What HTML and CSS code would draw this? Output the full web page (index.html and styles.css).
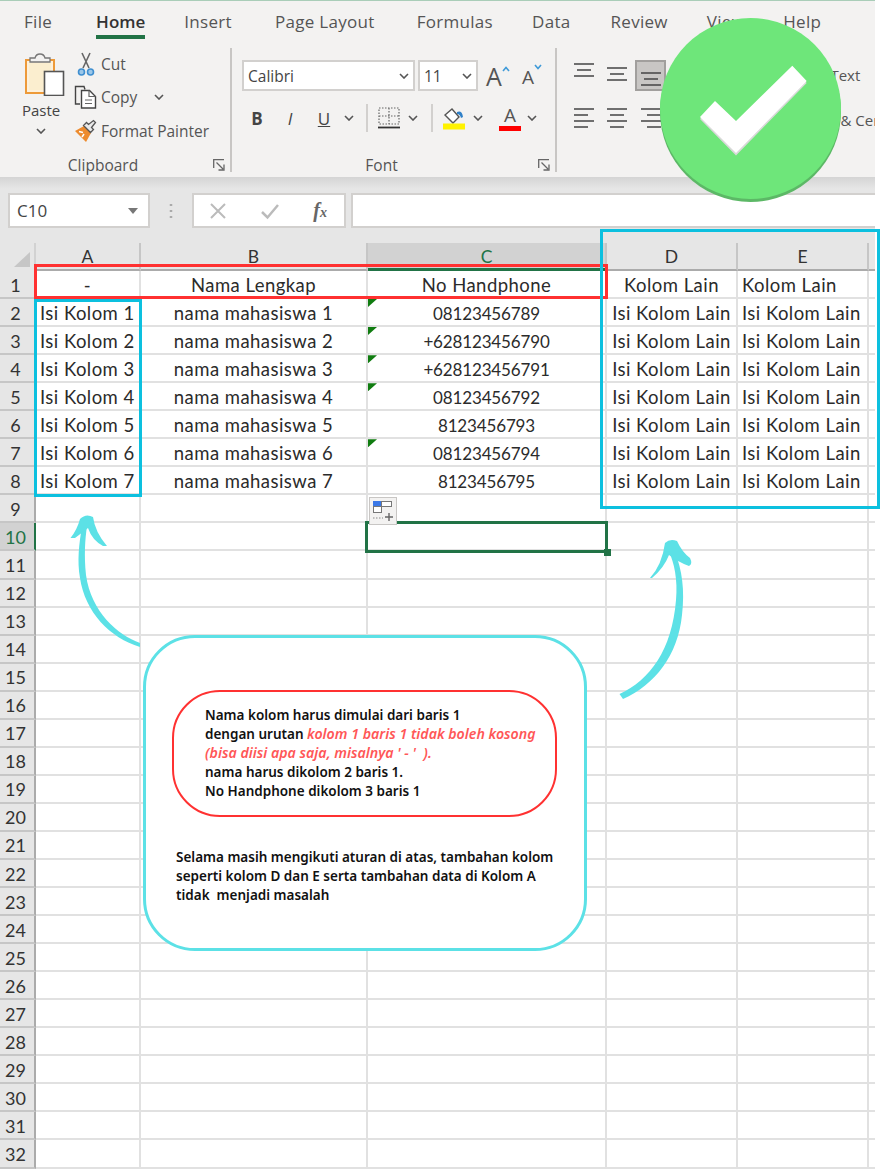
FILE: index.html
```html
<!DOCTYPE html>
<html lang="id">
<head>
<meta charset="utf-8">
<title>Format Excel</title>
<link rel="stylesheet" href="styles.css">
</head>
<body>
<svg class="defs" width="0" height="0" aria-hidden="true">
  <symbol id="chev" viewBox="0 0 10 6"><polyline points="1,1 5,5 9,1" fill="none" stroke="#555" stroke-width="1.6"/></symbol>
  <symbol id="launch" viewBox="0 0 12 12"><path d="M.7 9V.7H11M3.5 3.5L10 10M5.5 11H11V5.5" fill="none" stroke="#666" stroke-width="1.3"/></symbol>
  <symbol id="al-left" viewBox="0 0 20 20"><path d="M0 1h20M0 7h14M0 13h20M0 19h14" stroke="#444" stroke-width="1.5"/></symbol>
  <symbol id="al-center" viewBox="0 0 20 20"><path d="M0 1h20M3 7h14M0 13h20M3 19h14" stroke="#444" stroke-width="1.5"/></symbol>
  <symbol id="al-right" viewBox="0 0 20 20"><path d="M0 1h20M6 7h14M0 13h20M6 19h14" stroke="#444" stroke-width="1.5"/></symbol>
  <symbol id="al-v" viewBox="0 0 20 14"><path d="M0 1h20M3 7h14M0 13h20" stroke="#444" stroke-width="1.5"/></symbol>
</svg>

<main class="app">
  <header class="ribbon">
    <nav class="tabs">
      <span class="tab tab-file">File</span>
      <span class="tab tab-home">Home</span>
      <span class="tab tab-insert">Insert</span>
      <span class="tab tab-layout">Page Layout</span>
      <span class="tab tab-formulas">Formulas</span>
      <span class="tab tab-data">Data</span>
      <span class="tab tab-review">Review</span>
      <span class="tab tab-view">View</span>
      <span class="tab tab-help">Help</span>
    </nav>
    <div class="groups">
      <section class="group group-clip">
        <div class="clip-body">
          <div class="paste">
            <svg class="paste-icon" width="40" height="43" viewBox="0 0 40 43">
              <rect x="1" y="7" width="28" height="33" fill="#fdf1dc" stroke="#ed9a3a" stroke-width="2"/>
              <path d="M4 10h22v27H4z" fill="#fbeecf"/>
              <path d="M5 9V5h5q1-4 5-4t5 4h5v4z" fill="#f3f2f1" stroke="#777" stroke-width="1.3"/>
              <rect x="19.5" y="18.5" width="19" height="24" fill="#fff" stroke="#555" stroke-width="1.6"/>
            </svg>
            <span class="paste-label">Paste</span>
            <svg class="chev"><use href="#chev"/></svg>
          </div>
          <div class="clip-list">
            <div class="clip-item">
              <svg class="clip-icon" width="24" height="24" viewBox="0 0 24 24">
                <path d="M8 1l7 15M16 1L9 16" stroke="#666" stroke-width="1.6" fill="none"/>
                <circle cx="7.5" cy="20" r="3" fill="#9cc7e8" stroke="#3f8fd0" stroke-width="1.6"/>
                <circle cx="16.5" cy="20" r="3" fill="#9cc7e8" stroke="#3f8fd0" stroke-width="1.6"/>
              </svg>
              <span>Cut</span>
            </div>
            <div class="clip-item">
              <svg class="clip-icon" width="24" height="24" viewBox="0 0 24 24">
                <path d="M6 19H1.5V1.5h8.5l1 3" fill="none" stroke="#444" stroke-width="1.4"/>
                <path d="M7.5 5.5h8l6 6v11.5h-14z" fill="#fff" stroke="#444" stroke-width="1.4"/>
                <path d="M15 5.5v6h6.500M11 15h7M11 18.500h7" fill="none" stroke="#666" stroke-width="1.200"/>
              </svg>
              <span>Copy</span>
              <svg class="chev chev-copy"><use href="#chev"/></svg>
            </div>
            <div class="clip-item">
              <svg class="clip-icon" width="24" height="24" viewBox="0 0 24 24">
                <path d="M1 12l9-5 7 7-5 9z" fill="#ed8b2e"/>
                <path d="M5 12.500l4 1M8 18l2-3" stroke="#fff" stroke-width="1.500"/>
                <path d="M9.500 6.500l7 7 3-3-2-2 4-5-2-2-5 4-2-2z" fill="#e9e9e9" stroke="#555" stroke-width="1.300"/>
              </svg>
              <span>Format Painter</span>
            </div>
          </div>
        </div>
        <footer class="gfoot"><span class="glabel">Clipboard</span><svg class="launch"><use href="#launch"/></svg></footer>
      </section>

      <section class="group group-font">
        <div class="font-row1">
          <div class="combo combo-name"><span>Calibri</span><svg class="chev"><use href="#chev"/></svg></div>
          <div class="combo combo-size"><span>11</span><svg class="chev"><use href="#chev"/></svg></div>
          <span class="grow"><span class="grow-a">A</span><svg width="8" height="6" viewBox="0 0 8 6"><polyline points="1,5 4,1.500 7,5" fill="none" stroke="#3f9ad8" stroke-width="1.600"/></svg></span>
          <span class="shrink"><span class="shrink-a">A</span><svg width="8" height="6" viewBox="0 0 8 6"><polyline points="1,1 4,4.500 7,1" fill="none" stroke="#3f9ad8" stroke-width="1.600"/></svg></span>
        </div>
        <div class="font-row2">
          <span class="tool t-b">B</span>
          <span class="tool t-i">I</span>
          <span class="tool t-u">U</span>
          <span class="tool t-chev1"><svg class="chev"><use href="#chev"/></svg></span>
          <span class="sep sep1"></span>
          <span class="tool t-border">
            <svg width="22" height="22" viewBox="0 0 22 22">
              <path d="M1 1h20v16H1zM11 1v16M1 9h20" fill="none" stroke="#666" stroke-width="1.200" stroke-dasharray="1.500 1.500"/>
              <path d="M0 20.500h22" stroke="#333" stroke-width="1.800"/>
            </svg>
          </span>
          <span class="tool t-chev2"><svg class="chev"><use href="#chev"/></svg></span>
          <span class="sep sep2"></span>
          <span class="tool t-fill">
            <svg width="24" height="24" viewBox="0 0 24 24">
              <path d="M3 9l7-6 7 8-6 6z" fill="#fff" stroke="#555" stroke-width="1.400"/>
              <path d="M15 6q5-2 6 5l-2 1q-1-4-4-4z" fill="#2f80c8"/>
              <rect x="1" y="17.500" width="22" height="6" fill="#fff200"/>
            </svg>
          </span>
          <span class="tool t-chev3"><svg class="chev"><use href="#chev"/></svg></span>
          <span class="tool t-color"><span class="color-a">A</span><span class="color-bar"></span></span>
          <span class="tool t-chev4"><svg class="chev"><use href="#chev"/></svg></span>
        </div>
        <footer class="gfoot"><span class="glabel">Font</span><svg class="launch"><use href="#launch"/></svg></footer>
      </section>

      <section class="group-align">
        <div class="align-row">
          <svg class="al al-top" width="20" height="14"><use href="#al-v"/></svg>
          <svg class="al al-mid" width="20" height="14"><use href="#al-v"/></svg>
          <span class="al-sel"><svg width="20" height="14"><use href="#al-v"/></svg></span>
          <span class="wrap-label">Wrap Text</span>
        </div>
        <div class="align-row align-row2">
          <svg class="al" width="20" height="20"><use href="#al-left"/></svg>
          <svg class="al al-2" width="20" height="20"><use href="#al-center"/></svg>
          <svg class="al al-3" width="20" height="20"><use href="#al-right"/></svg>
          <span class="merge-label">Merge &amp; Center</span>
        </div>
      </section>
    </div>
  </header>

  <div class="fbar">
    <div class="namebox"><span>C10</span><span class="namecaret"></span></div>
    <svg class="fdots" width="4" height="16" viewBox="0 0 4 16"><path d="M2 1v2M2 7v2M2 13v2" stroke="#aaa" stroke-width="2.500"/></svg>
    <div class="fbtns">
      <svg width="18" height="18" viewBox="0 0 18 18"><path d="M2 2l14 14M16 2L2 16" stroke="#bbb" stroke-width="2"/></svg>
      <svg width="20" height="18" viewBox="0 0 20 18"><path d="M2 10l5.500 5.500L18 3" fill="none" stroke="#bbb" stroke-width="2.500"/></svg>
      <span class="fx"><i>f</i><i class="fx-x">x</i></span>
    </div>
    <div class="finput"></div>
  </div>

  <div class="sheet">
    <div class="row row-head">
      <div class="corner"></div>
      <div class="ch">A</div><div class="ch">B</div><div class="ch ch-sel">C</div><div class="ch">D</div><div class="ch">E</div><div class="ch ch-end"></div>
    </div>
    <div class="row"><div class="rh">1</div><div class="c ctr">-</div><div class="c ctr">Nama Lengkap</div><div class="c ctr">No Handphone</div><div class="c ctr">Kolom Lain</div><div class="c lft">Kolom Lain</div><div class="c"></div></div>
    <div class="row"><div class="rh">2</div><div class="c lft">Isi Kolom 1</div><div class="c ctr">nama mahasiswa 1</div><div class="c ctr num note">08123456789</div><div class="c ctr">Isi Kolom Lain</div><div class="c lft">Isi Kolom Lain</div><div class="c"></div></div>
    <div class="row"><div class="rh">3</div><div class="c lft">Isi Kolom 2</div><div class="c ctr">nama mahasiswa 2</div><div class="c ctr num note">+628123456790</div><div class="c ctr">Isi Kolom Lain</div><div class="c lft">Isi Kolom Lain</div><div class="c"></div></div>
    <div class="row"><div class="rh">4</div><div class="c lft">Isi Kolom 3</div><div class="c ctr">nama mahasiswa 3</div><div class="c ctr num note">+628123456791</div><div class="c ctr">Isi Kolom Lain</div><div class="c lft">Isi Kolom Lain</div><div class="c"></div></div>
    <div class="row"><div class="rh">5</div><div class="c lft">Isi Kolom 4</div><div class="c ctr">nama mahasiswa 4</div><div class="c ctr num note">08123456792</div><div class="c ctr">Isi Kolom Lain</div><div class="c lft">Isi Kolom Lain</div><div class="c"></div></div>
    <div class="row"><div class="rh">6</div><div class="c lft">Isi Kolom 5</div><div class="c ctr">nama mahasiswa 5</div><div class="c ctr num">8123456793</div><div class="c ctr">Isi Kolom Lain</div><div class="c lft">Isi Kolom Lain</div><div class="c"></div></div>
    <div class="row"><div class="rh">7</div><div class="c lft">Isi Kolom 6</div><div class="c ctr">nama mahasiswa 6</div><div class="c ctr num note">08123456794</div><div class="c ctr">Isi Kolom Lain</div><div class="c lft">Isi Kolom Lain</div><div class="c"></div></div>
    <div class="row"><div class="rh">8</div><div class="c lft">Isi Kolom 7</div><div class="c ctr">nama mahasiswa 7</div><div class="c ctr num">8123456795</div><div class="c ctr">Isi Kolom Lain</div><div class="c lft">Isi Kolom Lain</div><div class="c"></div></div>
    <div class="row"><div class="rh">9</div><div class="c"></div><div class="c"></div><div class="c c-paste"><span class="pasteopt"><svg width="24" height="24" viewBox="0 0 24 24"><rect x="2.500" y="2.500" width="8" height="5" fill="#3b78e7" stroke="#3b78e7"/><rect x="10.500" y="2.500" width="10" height="5" fill="#fff" stroke="#777"/><rect x="2.500" y="7.500" width="8" height="6" fill="#fff" stroke="#777"/><path d="M2 19h10" stroke="#888" stroke-dasharray="1.500 1.500"/><path d="M18 14v8M14 18h8" stroke="#666" stroke-width="1.400"/></svg></span></div><div class="c"></div><div class="c"></div><div class="c"></div></div>
    <div class="row"><div class="rh rh-sel">10</div><div class="c"></div><div class="c"></div><div class="c c-sel"></div><div class="c"></div><div class="c"></div><div class="c"></div></div>
    <div class="row"><div class="rh">11</div><div class="c"></div><div class="c"></div><div class="c"></div><div class="c"></div><div class="c"></div><div class="c"></div></div>
    <div class="row"><div class="rh">12</div><div class="c"></div><div class="c"></div><div class="c"></div><div class="c"></div><div class="c"></div><div class="c"></div></div>
    <div class="row"><div class="rh">13</div><div class="c"></div><div class="c"></div><div class="c"></div><div class="c"></div><div class="c"></div><div class="c"></div></div>
    <div class="row"><div class="rh">14</div><div class="c"></div><div class="c"></div><div class="c"></div><div class="c"></div><div class="c"></div><div class="c"></div></div>
    <div class="row"><div class="rh">15</div><div class="c"></div><div class="c"></div><div class="c"></div><div class="c"></div><div class="c"></div><div class="c"></div></div>
    <div class="row"><div class="rh">16</div><div class="c"></div><div class="c"></div><div class="c"></div><div class="c"></div><div class="c"></div><div class="c"></div></div>
    <div class="row"><div class="rh">17</div><div class="c"></div><div class="c"></div><div class="c"></div><div class="c"></div><div class="c"></div><div class="c"></div></div>
    <div class="row"><div class="rh">18</div><div class="c"></div><div class="c"></div><div class="c"></div><div class="c"></div><div class="c"></div><div class="c"></div></div>
    <div class="row"><div class="rh">19</div><div class="c"></div><div class="c"></div><div class="c"></div><div class="c"></div><div class="c"></div><div class="c"></div></div>
    <div class="row"><div class="rh">20</div><div class="c"></div><div class="c"></div><div class="c"></div><div class="c"></div><div class="c"></div><div class="c"></div></div>
    <div class="row"><div class="rh">21</div><div class="c"></div><div class="c"></div><div class="c"></div><div class="c"></div><div class="c"></div><div class="c"></div></div>
    <div class="row"><div class="rh">22</div><div class="c"></div><div class="c"></div><div class="c"></div><div class="c"></div><div class="c"></div><div class="c"></div></div>
    <div class="row"><div class="rh">23</div><div class="c"></div><div class="c"></div><div class="c"></div><div class="c"></div><div class="c"></div><div class="c"></div></div>
    <div class="row"><div class="rh">24</div><div class="c"></div><div class="c"></div><div class="c"></div><div class="c"></div><div class="c"></div><div class="c"></div></div>
    <div class="row"><div class="rh">25</div><div class="c"></div><div class="c"></div><div class="c"></div><div class="c"></div><div class="c"></div><div class="c"></div></div>
    <div class="row"><div class="rh">26</div><div class="c"></div><div class="c"></div><div class="c"></div><div class="c"></div><div class="c"></div><div class="c"></div></div>
    <div class="row"><div class="rh">27</div><div class="c"></div><div class="c"></div><div class="c"></div><div class="c"></div><div class="c"></div><div class="c"></div></div>
    <div class="row"><div class="rh">28</div><div class="c"></div><div class="c"></div><div class="c"></div><div class="c"></div><div class="c"></div><div class="c"></div></div>
    <div class="row"><div class="rh">29</div><div class="c"></div><div class="c"></div><div class="c"></div><div class="c"></div><div class="c"></div><div class="c"></div></div>
    <div class="row"><div class="rh">30</div><div class="c"></div><div class="c"></div><div class="c"></div><div class="c"></div><div class="c"></div><div class="c"></div></div>
    <div class="row"><div class="rh">31</div><div class="c"></div><div class="c"></div><div class="c"></div><div class="c"></div><div class="c"></div><div class="c"></div></div>
    <div class="row"><div class="rh">32</div><div class="c"></div><div class="c"></div><div class="c"></div><div class="c"></div><div class="c"></div><div class="c"></div></div>
  </div>

  <div class="mark mark-red"></div>
  <div class="mark mark-blue-a"></div>
  <div class="mark mark-blue-de"></div>

  <svg class="arrow arrow-left" width="90" height="145" viewBox="60 510 90 145">
    <path d="M140 643C118 635 91 612 86 575C84 555 85 540 87 526L82 526C79 545 77 560 80 578C85 612 110 638 140 647Z" fill="#5ce1e6"/>
    <path d="M70.500 538Q77 530 80 519Q86 513 93 517Q95 532 107 546L103 546Q92 540 88 528Q83 532 75 538Z" fill="#5ce1e6"/>
  </svg>
  <svg class="arrow arrow-right" width="90" height="175" viewBox="610 530 90 175">
    <path d="M619.500 694C650 680 672 650 676 600C678 580 674 562 669 552L675 552C682 570 685 590 682 615C678 655 655 685 623 699Z" fill="#5ce1e6"/>
    <path d="M650 578Q662 565 665 543Q670 538 677 541Q682 552 690 558Q693 564 689 566Q678 562 669 555Q664 568 652 578Z" fill="#5ce1e6"/>
  </svg>

  <aside class="callout">
    <p class="rule">Nama kolom harus dimulai dari baris 1<br>dengan urutan <em>kolom 1 baris 1 tidak boleh kosong<br>(bisa diisi apa saja, misalnya ' - '&nbsp; ).</em><br>nama harus dikolom 2 baris 1.<br>No Handphone dikolom 3 baris 1</p>
    <p class="extra">Selama masih mengikuti aturan di atas, tambahan kolom<br>seperti kolom D dan E serta tambahan data di Kolom A<br>tidak&nbsp; menjadi masalah</p>
  </aside>

  <svg class="badge" width="182" height="186" viewBox="660 17 182 186">
    <circle cx="750.500" cy="111.500" r="90.500" fill="#5cb866"/>
    <circle cx="750.500" cy="108.500" r="90.500" fill="#6ee67a"/>
    <path d="M700 119L715 103.500L736 123.500L792.300 67.500L806.700 83L736 155.500Z" fill="#d9d9d9"/>
    <path d="M700 117L715 101L736 121L792.300 65.700L806.700 81L736 153Z" fill="#fff"/>
  </svg>
</main>
</body>
</html>
```
FILE: styles.css
```css
* { box-sizing: border-box; }
html, body { margin: 0; padding: 0; background: #fff; }
body { font-family: "Open Sans", "Liberation Sans", sans-serif; color: #444; }
.defs { position: absolute; }
.app { position: relative; width: 881px; height: 1175px; overflow: hidden; }

/* ribbon */
.ribbon { width: 875px; height: 177px; background: #f3f2f1; border-top: 1px solid #a9cdb8; overflow: hidden; }
.tabs { display: flex; height: 47px; padding-left: 24px; font-size: 17px; letter-spacing: .3px; color: #555; }
.tab { height: 38px; line-height: 42px; white-space: nowrap; }
.tab-home { margin-left: 44px; color: #333; font-weight: 600; letter-spacing: 0; border-bottom: 4px solid #217346; }
.tab-insert { margin-left: 39px; }
.tab-layout { margin-left: 43px; }
.tab-formulas { margin-left: 42px; }
.tab-data { margin-left: 39px; }
.tab-review { margin-left: 40px; }
.tab-view { margin-left: 39px; }
.tab-help { margin-left: 38px; }

.groups { display: flex; height: 124px; }
.group { display: flex; flex-direction: column; border-right: 2px solid #c8c6c4; }
.group-clip { width: 232px; }
.group-font { width: 325px; padding-left: 10px; }
.gfoot { display: flex; align-items: center; margin-top: auto; margin-bottom: -5px; height: 24px; }
.group-font .gfoot { margin-left: -10px; }
.glabel { flex: 1; text-align: center; font-size: 15.500px; color: #555; }
.launch { width: 12px; height: 12px; margin: 0 5px 0 7px; flex: none; }
.chev { width: 10px; height: 6px; display: block; flex: none; }

.clip-body { display: flex; }
.paste { width: 74px; padding-left: 22px; display: flex; flex-direction: column; align-items: flex-start; padding-top: 5px; }
.paste-icon { margin-left: 3px; }
.paste-label { font-size: 15px; line-height: 20px; margin-top: 4px; }
.paste .chev { margin: 8px 0 0 14px; }
.clip-list { display: flex; flex-direction: column; margin-top: -1px; }
.clip-item { display: flex; align-items: center; height: 33.500px; font-size: 15.500px; color: #555; white-space: nowrap; }
.clip-icon { margin-right: 3px; flex: none; }
.chev-copy { margin-left: 17px; }

.font-row1 { display: flex; align-items: center; margin-top: 12px; height: 31px; }
.combo { display: flex; align-items: center; justify-content: space-between; height: 31px; background: #fff; border: 2px solid #d2d0ce; padding: 0 4px; font-size: 15.500px; color: #444; }
.combo-name { width: 173px; }
.combo-size { width: 60px; margin-left: 3px; }
.grow { display: flex; margin-left: 8px; width: 36px; align-items: flex-start; }
.grow-a { font-size: 25px; line-height: 30px; color: #555; }
.grow svg { margin-top: 5px; }
.shrink { display: flex; width: 24px; align-items: flex-start; }
.shrink-a { font-size: 19px; line-height: 30px; color: #555; margin-top: 3px; }
.shrink svg { margin-top: 5px; }

.font-row2 { display: flex; align-items: center; height: 28px; margin-top: 13px; }
.tool { display: flex; align-items: center; justify-content: center; flex: none; height: 28px; }
.t-b { width: 30px; font-weight: 700; font-size: 17px; }
.t-i { width: 36px; font-style: italic; font-size: 17px; }
.t-u { width: 32px; font-size: 17px; text-decoration: underline; }
.t-chev1 { width: 18px; }
.sep { width: 2px; height: 28px; background: #d2d0ce; flex: none; }
.sep1 { margin: 0 8px 0 8px; }
.t-border { width: 25px; }
.t-chev2 { width: 24px; }
.sep2 { margin: 0 4px 0 6px; }
.t-fill { width: 34px; }
.t-chev3 { width: 14px; }
.t-color { width: 30px; margin-left: 10px; flex-direction: column; justify-content: flex-start; }
.color-a { font-size: 19px; line-height: 22px; color: #555; }
.color-bar { width: 22px; height: 5px; background: #f00; }
.t-chev4 { width: 14px; }

.group-align { flex: 1; padding: 12px 0 0 17px; min-width: 0; overflow: hidden; }
.align-row { display: flex; align-items: center; height: 30px; white-space: nowrap; font-size: 15px; color: #555; }
.align-row2 { margin-top: 13px; }
.al { display: block; flex: none; }
.al-top { margin-bottom: 11px; }
.al-mid { margin: 0 0 2px 13px; }
.align-row .al-2 { margin-left: 13px; }
.align-row .al-3 { margin-left: 14px; }
.al-sel { display: flex; align-items: center; justify-content: center; width: 31px; height: 31px; margin-left: 8px; background: #c8c6c4; border: 2px solid #a19f9d; flex: none; padding-top: 7px; }
.wrap-label { margin-left: 123px; }
.merge-label { margin: 4px 0 0 131px; }

/* formula bar */
.fbar { display: flex; align-items: stretch; width: 875px; height: 66px; padding: 16px 0 15px 8px; background: linear-gradient(#d4d4d4, #e6e6e6 12px); }
.namebox { display: flex; align-items: center; justify-content: space-between; width: 142px; background: #fff; border: 2px solid #d2d0ce; padding: 0 10px 0 7px; font-size: 17px; color: #444; }
.namecaret { width: 0; height: 0; border: 5px solid transparent; border-top: 6px solid #777; border-bottom: 0; }
.fdots { align-self: center; margin: 0 19px 0 19px; }
.fbtns { display: flex; align-items: center; justify-content: space-between; width: 154px; padding: 0 17px 0 15px; background: #fff; border: 2px solid #d2d0ce; }
.fx { font-family: "Liberation Serif", serif; font-weight: 700; font-size: 20px; color: #666; }
.fx-x { font-size: 14px; }
.finput { flex: 1; margin-left: 5px; background: #fff; border: 2px solid #d2d0ce; border-right: 0; }

/* sheet */
.sheet { width: 875px; font-family: Lato, "Open Sans", sans-serif; }
.row { display: grid; grid-template-columns: 36px 105px 227px 239px 131px 131px 6px; height: 28.050px; }
.row-head { height: 28px; background: #e6e6e6; }
.corner { position: relative; border-right: 2px solid #d2d2d2; }
.corner::after { content: ""; position: absolute; right: 4px; bottom: 4px; width: 16px; height: 15px; background: #c6c6c6; clip-path: polygon(100% 0, 100% 100%, 0 100%); }
.ch { display: flex; align-items: center; justify-content: center; padding-top: 1px; font-size: 17.500px; color: #333; border-right: 2px solid #c6c6c6; border-bottom: 2px solid #ababab; }
.ch-sel { background: #d2d2d2; color: #217346; border-bottom: 3px solid #217346; }
.ch-end { border-right: 0; }
.rh { display: flex; align-items: center; justify-content: center; padding: 1px 3px 0 0; font-size: 18px; color: #333; background: #e6e6e6; border-right: 2px solid #ababab; border-bottom: 2px solid #c6c6c6; }
.rh-sel { background: #d2d2d2; color: #217346; border-right: 2px solid #217346; }
.c { position: relative; display: flex; align-items: center; min-width: 0; padding-top: 1px; font-size: 18.500px; letter-spacing: .45px; color: #2b2b2b; white-space: nowrap; border-right: 2px solid #e1e1e1; border-bottom: 2px solid #e1e1e1; }
.c:last-child { border-right: 0; }
.ctr { justify-content: center; }
.lft { padding-left: 4px; }
.c.num { padding-top: 2px; font-size: 17px; letter-spacing: -.15px; }
.note::before { content: ""; position: absolute; left: 0; top: 0; width: 9px; height: 8px; background: #107c10; clip-path: polygon(0 0, 100% 0, 0 100%); }
.c-sel { z-index: 2; }
.c-sel::before { content: ""; position: absolute; left: -3px; right: -3px; top: -2px; bottom: -4px; border: 3px solid #217346; }
.c-sel::after { content: ""; position: absolute; right: -6px; bottom: -7px; width: 7px; height: 7px; background: #217346; }
.pasteopt { position: absolute; left: 1px; top: 2px; z-index: 3; display: flex; align-items: center; justify-content: center; width: 28px; height: 28px; background: #f3f2f1; border: 1px solid #c8c6c4; }

/* annotations laid over the sheet */
.mark { position: absolute; z-index: 4; pointer-events: none; }
.mark-red { left: 34px; top: 264px; width: 574px; height: 35px; border: 3px solid #ff3131; }
.mark-blue-a { left: 34px; top: 299px; width: 108px; height: 198px; border: 3px solid #0cc0df; }
.mark-blue-de { left: 600px; top: 229px; width: 280px; height: 280px; border: 3px solid #0cc0df; }
.arrow { position: absolute; z-index: 4; }
.arrow-left { left: 60px; top: 510px; }
.arrow-right { left: 610px; top: 530px; }
.callout { position: absolute; z-index: 4; left: 143px; top: 635px; width: 444px; height: 316px; padding: 52px 0 0 26px; background: #fff; border: 3px solid #5ce1e6; border-radius: 52px; font-family: "Noto Sans", sans-serif; font-weight: 600; font-size: 13.500px; line-height: 19px; color: #111; }
.callout p { margin: 0; white-space: nowrap; }
.rule { width: 385px; height: 127px; padding: 14px 0 0 31px; border: 2px solid #ff3131; border-radius: 48px; }
.rule em { color: #ff5757; font-style: italic; font-size: 14.200px; line-height: 1; }
.callout .extra { margin: 31px 0 0 4px; }
.badge { position: absolute; z-index: 5; left: 660px; top: 17px; }
```
